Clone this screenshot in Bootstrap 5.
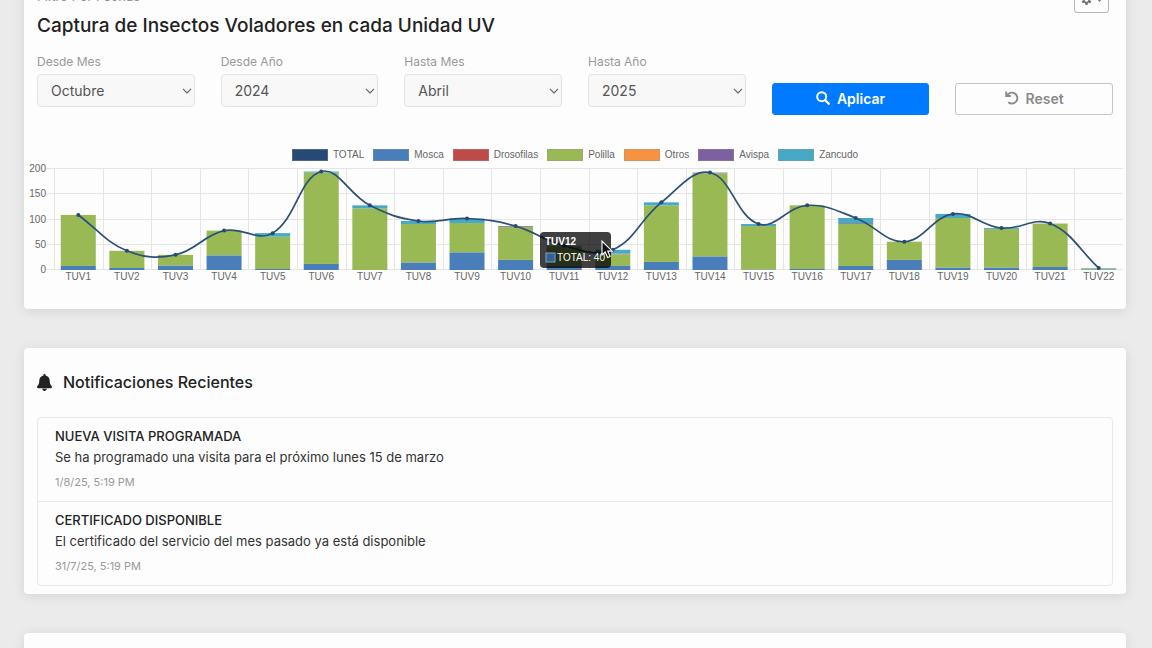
<!DOCTYPE html>
<html lang="es">
<head>
<meta charset="utf-8">
<meta name="viewport" content="width=device-width, initial-scale=1">
<title>Captura de Insectos Voladores</title>
<link href="https://cdn.jsdelivr.net/npm/bootstrap@5.3.0/dist/css/bootstrap.min.css" rel="stylesheet">
<style>
  body { background: #ebebeb; font-family: Inter, "Liberation Sans", sans-serif; color: #222; font-size: 14px; }
  .page { padding: 0 26px 0 24px; margin-top: -40px; }
  .panel { background: #fdfdfd; border: 0; border-radius: 4px; margin-bottom: 39px; box-shadow: 0 2px 12px rgba(0,0,0,.1); }
  .pad-x { padding-left: 13px; padding-right: 13px; }
  .panel-head { padding-top: 20px; height: 53px; }
  .panel-head span { font-size: 13px; color: #8f8f8f; }
  .btn-cog { width: 35px; height: 25px; padding: 0; margin-right: 4px; border: 1px solid #b5b5b5; border-radius: 3px; color: #777; gap: 5px; }
  .chart-title { font-size: 19px; line-height: 26px; font-weight: 500; margin: 0 0 14px; }
  .filters label { display: block; font-size: 12px; line-height: 18px; color: #999; margin-bottom: 3px; }
  .filters .form-select { height: 33px; margin-bottom: 8px; padding: 0 24px 0 13px; font-size: 14px; color: #555; background-color: #f8f8f8; border-color: #e3e3e3; border-radius: 4px;
    background-image: url("data:image/svg+xml,%3csvg xmlns='http://www.w3.org/2000/svg' viewBox='0 0 10 10'%3e%3cpath fill='none' stroke='%23666' stroke-width='1.1' stroke-linecap='round' stroke-linejoin='round' d='M1.2 3.2 5 7l3.800-3.800'/%3e%3c/svg%3e");
    background-position: right 2px center; background-size: 10px 10px; }
  .filters .btn { height: 32px; padding: 0 0 2px; font-size: 14px; font-weight: 600; border-radius: 3px; gap: 7px; }
  .btn-apply, .btn-apply:hover { background: #007bff; color: #fff; border-color: #007bff; }
  .btn-reset { background: #fdfdfd; color: #8a8a8a; border-color: #c4c4c4; }
  .legend-row { margin-top: 34px; gap: 9px; font: 10px/12px "Liberation Sans", sans-serif; color: #666; }
  .legend-row span { gap: 5px; }
  .legend-row i { width: 36px; height: 12px; border: 1px solid rgba(150,150,150,.4); }
  #chart { height: 128px; margin-bottom: 20px; }
  #chart text { font-family: "Liberation Sans", sans-serif; font-size: 10px; fill: #666; }
  #chart .tip-text { fill: #fff; }
  .notes-title { font-size: 16px; line-height: 24px; font-weight: 500; gap: 11px; padding-top: 22px; margin: 0 0 23px; }
  .notes { border: 1px solid #e8e8e8; border-radius: 4px; margin: 0 13px 8px; }
  .notes li { padding: 8px 17px 10px; }
  .notes li + li { border-top: 1px solid #e8e8e8; }
  .notes h3 { font-size: 13px; line-height: 20px; font-weight: 500; margin: 0; }
  .notes p { font-size: 13px; line-height: 22px; margin: 0 0 5px; color: #333; }
  .notes time { display: block; font-size: 11px; line-height: 18px; color: #999; }
</style>
</head>
<body class="vh-100 overflow-hidden">
<main class="page">
  <section class="panel card">
    <div class="panel-head pad-x d-flex align-items-center justify-content-between">
      <span>Filtro Por Fechas</span>
      <button type="button" class="btn btn-cog align-self-end d-flex align-items-center justify-content-center" aria-label="Opciones">
        <svg width="11" height="11" viewBox="0 0 16 16" fill="currentColor" aria-hidden="true"><path fill-rule="evenodd" d="M6.500 0h3l.4 2.200 1.500.9 2.100-.8 1.500 2.600-1.700 1.400v1.800l1.700 1.400-1.500 2.600-2.100-.8-1.500.9-.4 2.200h-3l-.4-2.200-1.500-.9-2.100.8L1 9.500l1.700-1.400V6.300L1 4.900l1.500-2.600 2.100.8 1.500-.9zM8 4.700a2.600 2.600 0 1 0 0 5.200 2.600 2.600 0 0 0 0-5.200z"/></svg>
        <svg width="5" height="3" viewBox="0 0 5 3" fill="currentColor" aria-hidden="true"><path d="M0 0h5L2.500 3z"/></svg>
      </button>
    </div>
    <h2 class="chart-title pad-x">Captura de Insectos Voladores en cada Unidad UV</h2>
    <form class="filters row g-0 align-items-end">
      <div class="col-2 pad-x"><label for="m1">Desde Mes</label><select id="m1" class="form-select"><option>Octubre</option></select></div>
      <div class="col-2 pad-x"><label for="a1">Desde Año</label><select id="a1" class="form-select"><option>2024</option></select></div>
      <div class="col-2 pad-x"><label for="m2">Hasta Mes</label><select id="m2" class="form-select"><option>Abril</option></select></div>
      <div class="col-2 pad-x"><label for="a2">Hasta Año</label><select id="a2" class="form-select"><option>2025</option></select></div>
      <div class="col-2 pad-x">
        <button type="button" class="btn btn-apply w-100 d-flex align-items-center justify-content-center">
          <svg width="14" height="14" viewBox="0 0 14 14" fill="none" stroke="currentColor" stroke-linecap="round" aria-hidden="true"><circle cx="5.700" cy="5.700" r="4.500" stroke-width="2"/><path d="M9.300 9.300 12.800 12.800" stroke-width="2.300"/></svg>Aplicar</button>
      </div>
      <div class="col-2 pad-x">
        <button type="button" class="btn btn-reset w-100 d-flex align-items-center justify-content-center">
          <svg width="14" height="14" viewBox="0 0 14 14" fill="none" stroke="currentColor" stroke-width="1.900" aria-hidden="true"><path d="M1.200 .5V5H5.800M1.900 4.700A5.500 5.500 0 1 1 3.300 11.300"/></svg>Reset</button>
      </div>
    </form>
    <div class="legend-row d-flex justify-content-center" id="legend"></div>
    <svg id="chart" class="d-block w-100" role="img" aria-label="Capturas por unidad UV"></svg>
  </section>

  <section class="panel card">
    <h2 class="notes-title pad-x d-flex align-items-center">
      <svg width="15" height="17" viewBox="0 0 15 17" fill="currentColor" aria-hidden="true"><path d="M7.500 0c.7 0 1.100.5 1.100 1.100v.4c2.500.5 4.100 2.400 4.100 5 0 3 .7 4.300 1.900 5.600.8.8.3 2.100-.8 2.100H1.200c-1.100 0-1.600-1.300-.8-2.100 1.200-1.300 1.900-2.600 1.900-5.600 0-2.600 1.600-4.500 4.100-5v-.4C6.400.5 6.800 0 7.500 0zM5.300 14.800h4.400c0 1.300-.9 2.200-2.200 2.200s-2.200-.9-2.200-2.200z"/></svg>
      Notificaciones Recientes</h2>
    <ul class="notes list-unstyled">
      <li><h3>NUEVA VISITA PROGRAMADA</h3><p>Se ha programado una visita para el próximo lunes 15 de marzo</p><time>1/8/25, 5:19 PM</time></li>
      <li><h3>CERTIFICADO DISPONIBLE</h3><p>El certificado del servicio del mes pasado ya está disponible</p><time>31/7/25, 5:19 PM</time></li>
    </ul>
  </section>

  <section class="panel card p-3"></section>
</main>
<script src="https://cdn.jsdelivr.net/npm/bootstrap@5.3.0/dist/js/bootstrap.bundle.min.js"></script>
<script>
  const series = [['TOTAL', '#264a75'], ['Mosca', '#4a7ebb'], ['Drosofilas', '#be4b48'], ['Polilla', '#98b954'], ['Otros', '#f79240'], ['Avispa', '#7d60a0'], ['Zancudo', '#46a9c5']];
  document.getElementById('legend').innerHTML = series.map(([n, c]) =>
    `<span class="d-flex align-items-center"><i style="background:${c}"></i>${n}</span>`).join('');

  // Per unit: Mosca, Polilla, Avispa, Zancudo
  const data = [[8,101,0,0],[4,34,0,0],[9,21,0,0],[29,49,0,0],[2,64,0,7],[12,181,0,2],[0,122,0,6],[15,76,0,6],[35,58,0,9],[20,65,2,0],
    [9,38,0,1],[8,23,2,7],[16,112,0,6],[27,164,2,0],[1,86,0,4],[2,126,0,0],[8,83,2,10],[20,36,0,0],[5,98,0,8],[5,76,0,2],[6,86,0,0],[1,2,0,1]];
  const fills = ['#4a7ebb', '#98b954', '#8d84a4', '#46a9c5'];
  const svg = document.getElementById('chart');

  function draw() {
    const W = svg.clientWidth, left = 30, right = W - 3, top = 8, base = 109, H = base - top;
    const step = (right - left) / data.length, y = v => base - v * H / 200;
    let o = '';
    for (let v = 0; v <= 200; v += 50)
      o += `<path d="M${left - 8} ${Math.round(y(v)) - .5}H${right}" stroke="#e5e5e5"/><text x="${left - 8}" y="${y(v) + 3}" text-anchor="end">${v}</text>`;
    for (let i = 0; i < data.length; i++)
      o += `<path d="M${Math.round(left + i * step) + .5} ${top}V${base}" stroke="#e5e5e5"/>`;
    const pts = [];
    data.forEach((d, i) => {
      const cx = left + (i + .5) * step, bw = step * .72;
      let sum = 0;
      d.forEach((v, k) => {
        if (v) o += `<rect x="${cx - bw / 2}" y="${y(sum + v)}" width="${bw}" height="${v * H / 200}" fill="${fills[k]}"/>`;
        sum += v;
      });
      pts.push([cx, y(sum)]);
      o += `<text x="${cx}" y="119" text-anchor="middle">TUV${i + 1}</text>`;
    });
    // Smoothed total line, tension 0.4
    const ctl = pts.map((p, i) => {
      const a = pts[i - 1] || p, b = pts[i + 1] || p;
      const d1 = Math.hypot(p[0] - a[0], p[1] - a[1]), d2 = Math.hypot(b[0] - p[0], b[1] - p[1]);
      const f1 = .4 * d1 / (d1 + d2), f2 = .4 * d2 / (d1 + d2), dx = b[0] - a[0], dy = b[1] - a[1];
      return [[p[0] - f1 * dx, p[1] - f1 * dy], [p[0] + f2 * dx, p[1] + f2 * dy]];
    });
    let path = `M${pts[0]}`;
    for (let i = 1; i < pts.length; i++) path += `C${ctl[i - 1][1]} ${ctl[i][0]} ${pts[i]}`;
    o += `<path d="${path}" fill="none" stroke="#2c5079" stroke-width="1.7"/>`;
    pts.forEach(p => o += `<circle cx="${p[0]}" cy="${p[1]}" r="2" fill="#264a75"/>`);
    // Tooltip and pointer beside TUV12
    const [tx, ty] = pts[11];
    o += `<g transform="translate(${Math.round(tx) - 73} ${Math.round(ty) - 18})">
      <rect width="71" height="36" rx="4" fill="#000" fill-opacity=".75"/>
      <text class="tip-text" x="5" y="13" font-weight="bold">TUV12</text>
      <rect x="6" y="21" width="9" height="9" fill="#366092" stroke="#7fa3cc"/>
      <text class="tip-text" x="17" y="29">TOTAL: 40</text>
      <path d="M62 9v14l3.200-3 2.400 5.500 2.500-1-2.400-5.400h4.400z" fill="#111" stroke="#fff" stroke-width="1.100"/></g>`;
    svg.innerHTML = o;
  }
  draw();
  addEventListener('resize', draw);
</script>
</body>
</html>
